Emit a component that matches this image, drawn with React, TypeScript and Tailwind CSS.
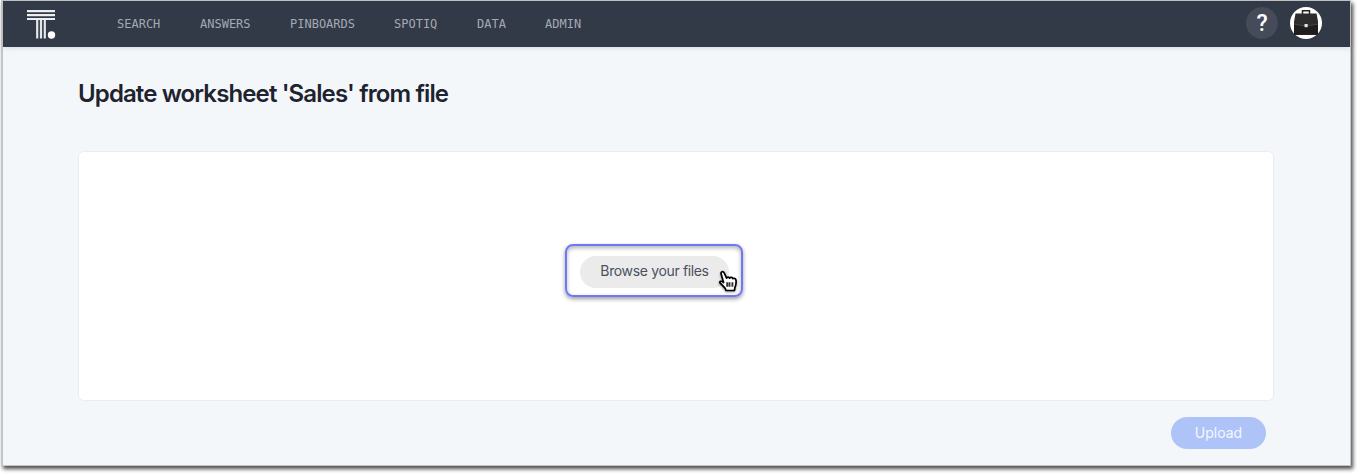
import React from 'react';

const navItems = [
  { label: 'SEARCH', width: 'w-[83px]' },
  { label: 'ANSWERS', width: 'w-[90px]' },
  { label: 'PINBOARDS', width: 'w-[104px]' },
  { label: 'SPOTIQ', width: 'w-[83px]' },
  { label: 'DATA', width: 'w-[68px]' },
  { label: 'ADMIN', width: 'w-[60px]' },
];

function Logo() {
  return (
    <svg className="ml-[24px] h-[30px] w-[30px]" viewBox="0 0 30 30" fill="none">
      <path d="M0 2.200h28M0 6.200h28M0 10h28" stroke="#eceef0" strokeWidth="2.200" />
      <path d="M10.200 11v18.500M14 11v18.500M17.800 11v18.500" stroke="#e4e6e9" strokeWidth="2.200" />
      <circle cx="24.500" cy="26" r="3.700" fill="#fff" />
    </svg>
  );
}

function Briefcase() {
  return (
    <svg className="h-8 w-8" viewBox="0 0 32 32">
      <circle cx="16" cy="16" r="16" fill="#fff" />
      <path d="M12.500 7V3.700h7V7" fill="none" stroke="#222" strokeWidth="1.500" />
      <path d="M5.500 6.500h21l1.500 8V28H4V14.500z" fill="#2d2d2d" />
      <path d="M4 17q6 1.500 12 1.700Q22 18.500 28 17v10.500H4z" fill="#1e1e1e" />
      <path d="M4 17q6 1.500 12 1.700Q22 18.500 28 17" fill="none" stroke="#464646" />
      <rect x="14.500" y="17" width="3.200" height="3.200" fill="#e3e3e3" />
    </svg>
  );
}

function HandCursor() {
  return (
    <svg className="absolute left-[150px] top-[23px] h-[24px] w-[22px] drop-shadow-[0_1px_1px_rgba(0,0,0,0.4)]" viewBox="0 0 22 24">
      <path
        d="M6.600 13.500 4.200 5.200C3.400 2.700 6 1.500 7.200 3.800l2.400 5.300c.5-1.400 2.500-1.400 3 0 .8-1.200 2.700-1 3.200.5 1.300-.8 3 .1 3.200 1.700.4 3-.1 5.200-1.200 7.700l-.3 2.500H9l-.7-2c-1.500-1.500-3-3.700-5.200-5.500-1.300-1.600 1-2.700 3.500-.5z"
        fill="#fff" stroke="#000" strokeWidth="1.700" strokeLinejoin="round"
      />
      <path d="M10.200 13.200v4.500M12.500 13.200v4.500M15.400 13.200v4.500" stroke="#333" strokeWidth="1.900" />
    </svg>
  );
}

export default function App() {
  return (
    <div className="h-[474px] w-[1357px] overflow-hidden bg-white pl-px font-['Inter',sans-serif]">
      <div className="flex h-[466px] w-[1350px] flex-col border-b border-l-2 border-r border-t border-[#c4c5c6] bg-[#f4f7fa] shadow-[2px_3px_4px_rgba(0,0,0,0.7)]">
        <header className="flex h-[46px] shrink-0 items-center bg-[#323947] shadow-[0_1px_5px_rgba(50,57,71,0.15)]">
          <Logo />
          <nav className="ml-[60px] flex font-['DejaVu_Sans_Mono',monospace] text-[12px] leading-4 text-[#a4a9b5]">
            {navItems.map((item) => (
              <a key={item.label} className={item.width}>{item.label}</a>
            ))}
          </nav>
          <div className="-mt-0.5 ml-auto mr-[28px] flex gap-3">
            <div className="flex h-8 w-8 items-center justify-center rounded-full bg-[#454b58] pt-0.5 font-['Roboto',sans-serif] text-[23px] font-medium text-white">?</div>
            <Briefcase />
          </div>
        </header>
        <main className="pl-[75px] pr-[76px] pt-[31px]">
          <h1 className="whitespace-nowrap text-[24px] font-[560] leading-8 tracking-[-0.88px] text-[#1d232f]">Update worksheet 'Sales' from file</h1>
          <section className="mt-[41px] flex h-[250px] rounded-md border border-[#e9edf1] bg-white pl-[486px] pt-[92px]">
            <div className="relative flex h-[53px] w-[178px] items-center rounded-lg border-2 border-[#7076f7] pl-[13px] shadow-[0_2px_4px_rgba(0,0,0,0.4),inset_0_2px_4px_rgba(0,0,0,0.3)]">
              <button className="mt-0.5 h-8 w-[149px] whitespace-nowrap rounded-full bg-[#ebebeb] pb-0.5 text-[14px] tracking-[-0.35px] text-[#4a515e]">Browse your files</button>
              <HandCursor />
            </div>
          </section>
          <div className="mt-4 flex justify-end pr-[8px]">
            <button className="h-8 w-[95px] rounded-full bg-[#aec4f8] pb-0.5 text-[14px] text-[#f4f7fe]">Upload</button>
          </div>
        </main>
      </div>
    </div>
  );
}
